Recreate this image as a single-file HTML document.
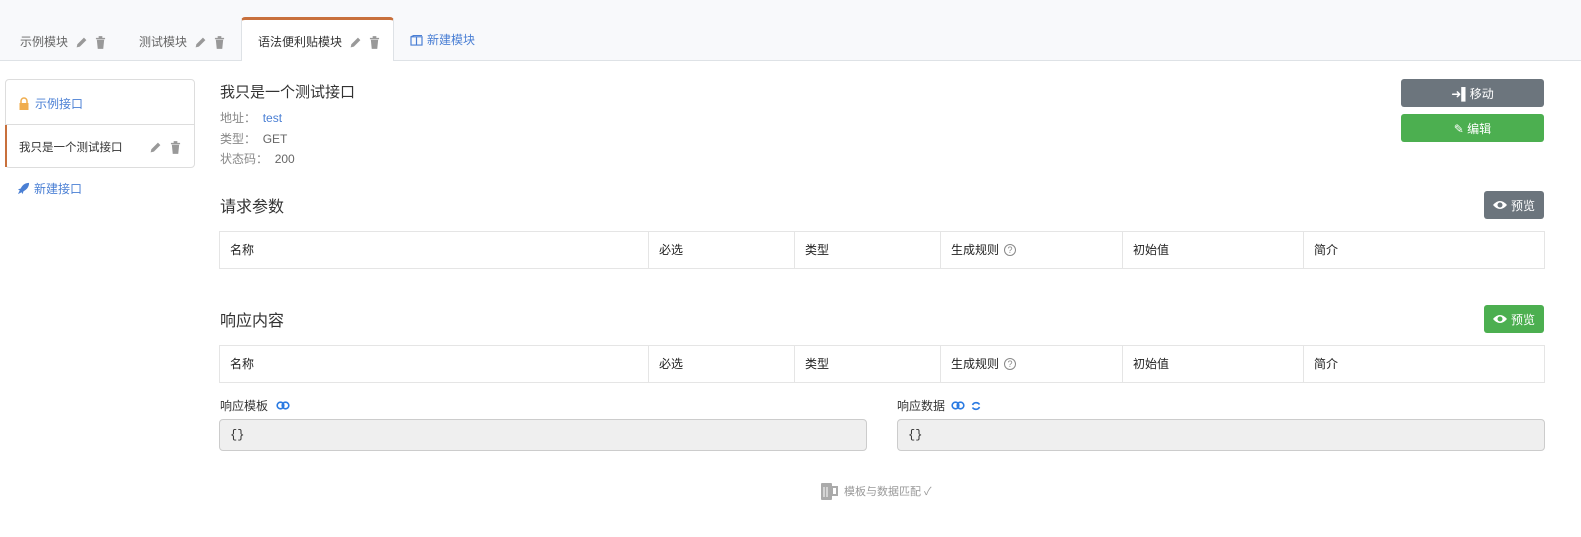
<!DOCTYPE html>
<html><head><meta charset="utf-8"><style>
*{box-sizing:border-box;margin:0;padding:0}
body{width:1581px;height:537px;background:#fff;font-family:"Liberation Sans","Noto Sans CJK SC",sans-serif;font-size:12px;color:#333;position:relative;overflow:hidden}
.abs{position:absolute}
.tabbar{left:0;top:0;width:1581px;height:61px;background:#f8f9fb;border-bottom:1px solid #dee2e6}
.tab{top:30px;height:22px;line-height:22px;color:#666;font-size:12px;display:flex;align-items:center;gap:7px}
.ic{fill:#999}
.active{left:241px;top:17px;width:153px;height:44px;background:#fff;border:1px solid #dee2e6;border-top:3px solid #c8703c;border-bottom:none;border-radius:4px 4px 0 0}
.btn{color:#fff;border-radius:3px;text-align:center;font-size:12px;display:flex;align-items:center;justify-content:center;gap:4px}
.tbl{left:219px;width:1326px;height:38px;border:1px solid #e5e5e5;display:flex}
.tbl div{border-right:1px solid #e5e5e5;padding-left:10px;line-height:36px;font-size:12px;color:#222;display:flex;align-items:center;gap:5px}
.tbl div:last-child{border-right:none}
.ta{top:419px;height:32px;background:#efefef;border:1px solid #ccc;border-radius:4px;font-family:"Liberation Mono",monospace;font-size:12px;line-height:30px;padding-left:10px}
.h{font-size:16px;color:#333}
.lbl{color:#888}
</style></head><body>
<div class="abs tabbar"></div>
<div class="abs active"></div>
<div class="abs tab" style="left:20px;top:31px">示例模块
<svg width="13" height="13" viewBox="0 0 16 16"><path class="ic" d="M2 14l1-4 8-8 3 3-8 8z"/></svg>
<svg width="11" height="13" viewBox="0 0 12 14"><path class="ic" d="M1 2h10v1.5H1zM4 0h4v2H4zM2 4h8l-1 10H3z"/></svg></div>
<div class="abs tab" style="left:139px;top:31px">测试模块
<svg width="13" height="13" viewBox="0 0 16 16"><path class="ic" d="M2 14l1-4 8-8 3 3-8 8z"/></svg>
<svg width="11" height="13" viewBox="0 0 12 14"><path class="ic" d="M1 2h10v1.5H1zM4 0h4v2H4zM2 4h8l-1 10H3z"/></svg></div>
<div class="abs tab" style="left:258px;top:31px;color:#333">语法便利贴模块
<svg width="13" height="13" viewBox="0 0 16 16"><path class="ic" d="M2 14l1-4 8-8 3 3-8 8z"/></svg>
<svg width="11" height="13" viewBox="0 0 12 14"><path class="ic" d="M1 2h10v1.5H1zM4 0h4v2H4zM2 4h8l-1 10H3z"/></svg></div>
<div class="abs tab" style="left:410px;top:29px;color:#4a7fd4;gap:4px"><svg width="13" height="11" viewBox="0 0 14 12"><path d="M1 2h12v9H1z M7 2v9 M1 2l3-1.5h9" fill="none" stroke="#4a7fd4" stroke-width="1.3"/></svg>新建模块</div>

<div class="abs" style="left:5px;top:79px;width:190px;height:89px;border:1px solid #ddd;border-radius:4px"></div>
<div class="abs" style="left:5px;top:124px;width:190px;height:1px;background:#ddd"></div>
<div class="abs" style="left:5px;top:125px;width:2px;height:42px;background:#c8703c"></div>
<div class="abs" style="left:19px;top:95px;color:#4a7fd4;display:flex;align-items:center;gap:6px"><svg width="10" height="13" viewBox="0 0 10 13"><path d="M2 6V4a3 3 0 016 0v2" fill="none" stroke="#f0ad4e" stroke-width="1.5"/><rect x="0.5" y="6" width="9" height="7" fill="#f0ad4e"/></svg>示例接口</div>
<div class="abs" style="left:19px;top:139px;font-size:11.5px;color:#333">我只是一个测试接口</div>
<svg class="abs" style="left:149px;top:141px" width="13" height="13" viewBox="0 0 16 16"><path class="ic" d="M2 14l1-4 8-8 3 3-8 8z"/></svg>
<svg class="abs" style="left:170px;top:141px" width="11" height="13" viewBox="0 0 12 14"><path class="ic" d="M1 2h10v1.5H1zM4 0h4v2H4zM2 4h8l-1 10H3z"/></svg>
<div class="abs" style="left:17px;top:180px;color:#4a7fd4;display:flex;align-items:center;gap:4px"><svg width="13" height="13" viewBox="0 0 14 14"><path d="M13 1C9 1 6 3 4 7L1 8l2 1-2 4 4-2 1 2 1-3c4-2 6-5 6-9z" fill="#4a7fd4"/></svg>新建接口</div>

<div class="abs" style="left:220px;top:81px;font-size:15px;color:#333">我只是一个测试接口</div>
<div class="abs" style="left:220px;top:109px"><span class="lbl">地址：</span> &nbsp;<span style="color:#4a7fd4">test</span></div>
<div class="abs" style="left:220px;top:130px"><span class="lbl">类型：</span> &nbsp;<span style="color:#666">GET</span></div>
<div class="abs" style="left:220px;top:150px"><span class="lbl">状态码：</span> &nbsp;<span style="color:#666">200</span></div>

<div class="abs btn" style="left:1401px;top:79px;width:143px;height:28px;background:#6c757d">➜▌移动</div>
<div class="abs btn" style="left:1401px;top:114px;width:143px;height:28px;background:#4caf50">✎ 编辑</div>

<div class="abs h" style="left:220px;top:193px">请求参数</div>
<div class="abs btn" style="left:1484px;top:191px;width:60px;height:28px;background:#6c757d"><svg width="14" height="10" viewBox="0 0 14 10"><path d="M0 5Q7-3 14 5Q7 13 0 5z" fill="#fff"/><circle cx="7" cy="5" r="2.5" fill="#6c757d"/></svg>预览</div>
<div class="abs tbl" style="top:231px">
<div style="width:429px">名称</div><div style="width:146px">必选</div><div style="width:146px">类型</div><div style="width:182px">生成规则 <span style="display:inline-block;width:12px;height:12px;border:1px solid #888;border-radius:50%;font-size:9px;line-height:10px;text-align:center;color:#888">?</span></div><div style="width:181px">初始值</div><div style="flex:1">简介</div></div>

<div class="abs h" style="left:220px;top:307px">响应内容</div>
<div class="abs btn" style="left:1484px;top:305px;width:60px;height:28px;background:#4caf50"><svg width="14" height="10" viewBox="0 0 14 10"><path d="M0 5Q7-3 14 5Q7 13 0 5z" fill="#fff"/><circle cx="7" cy="5" r="2.5" fill="#4caf50"/></svg>预览</div>
<div class="abs tbl" style="top:345px">
<div style="width:429px">名称</div><div style="width:146px">必选</div><div style="width:146px">类型</div><div style="width:182px">生成规则 <span style="display:inline-block;width:12px;height:12px;border:1px solid #888;border-radius:50%;font-size:9px;line-height:10px;text-align:center;color:#888">?</span></div><div style="width:181px">初始值</div><div style="flex:1">简介</div></div>

<div class="abs" style="left:220px;top:397px;display:flex;align-items:center;gap:8px">响应模板 <svg width="14" height="9" viewBox="0 0 14 9"><circle cx="4.5" cy="4.5" r="3.3" fill="none" stroke="#2a7ae2" stroke-width="1.6"/><circle cx="9.5" cy="4.5" r="3.3" fill="none" stroke="#2a7ae2" stroke-width="1.6"/></svg></div>
<div class="abs" style="left:897px;top:397px;display:flex;align-items:center;gap:6px">响应数据 <svg width="14" height="9" viewBox="0 0 14 9"><circle cx="4.5" cy="4.5" r="3.3" fill="none" stroke="#2a7ae2" stroke-width="1.6"/><circle cx="9.5" cy="4.5" r="3.3" fill="none" stroke="#2a7ae2" stroke-width="1.6"/></svg><svg width="10" height="10" viewBox="0 0 10 10"><path d="M8.5 3.5A4 4 0 001.5 4M1.5 6.5A4 4 0 008.5 6" fill="none" stroke="#2a7ae2" stroke-width="1.6"/></svg></div>
<div class="abs ta" style="left:219px;width:648px">{}</div>
<div class="abs ta" style="left:897px;width:648px">{}</div>

<div class="abs" style="left:820px;top:481px;display:flex;align-items:center;gap:6px;color:#999;font-size:11px"><svg width="18" height="19" viewBox="0 0 18 19"><rect x="1" y="2" width="11" height="17" rx="1" fill="#aaa"/><rect x="12" y="6" width="5" height="8" fill="none" stroke="#aaa" stroke-width="2"/><path d="M4 6v10M7 6v10" stroke="#fff" stroke-width="1"/></svg>模板与数据匹配 ✓</div>
</body></html>
